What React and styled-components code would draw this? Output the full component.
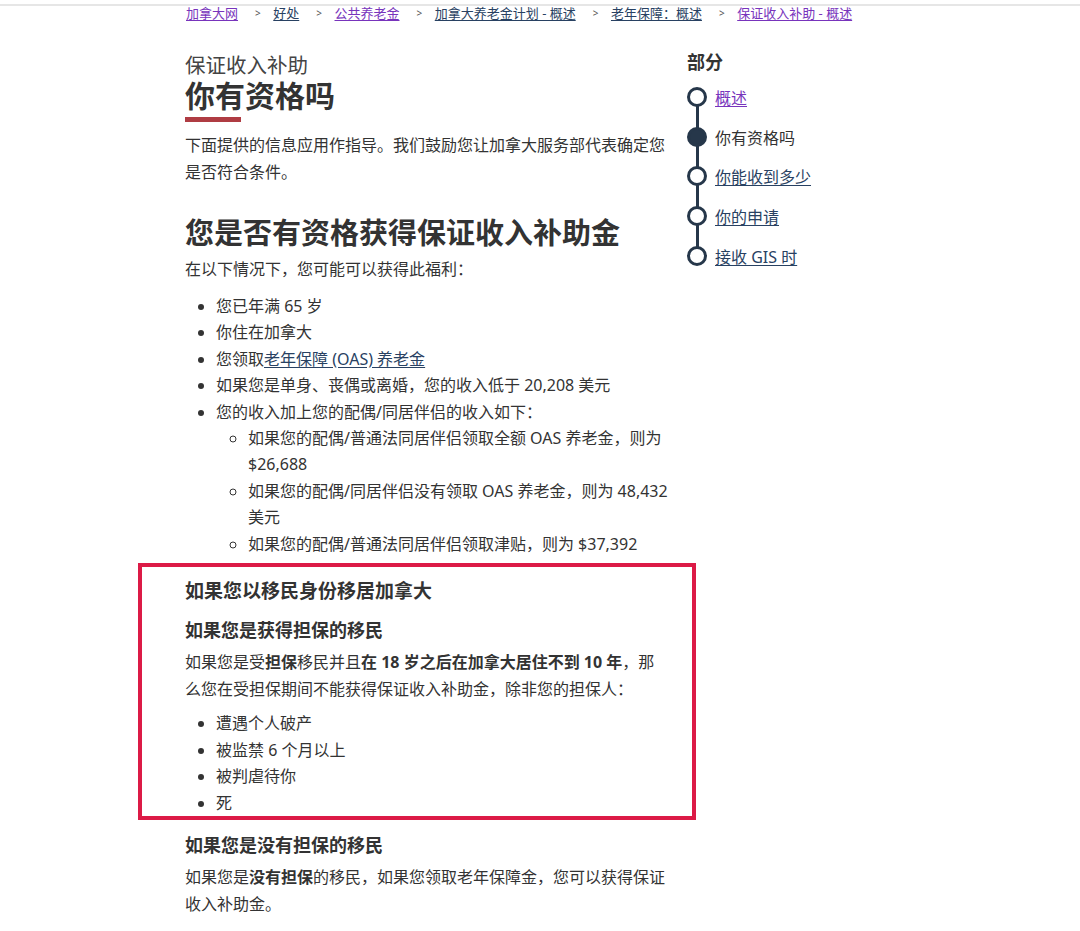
import styled, { createGlobalStyle } from "styled-components";

const GlobalStyle = createGlobalStyle`
    html, body {
        margin: 0;
        padding: 0;
        background: #fff;
    }
    body {
        font-family: "Noto Sans", "Noto Sans CJK SC", sans-serif;
        color: #333;
    }
`;

const Page = styled.div`
    width: 1080px;
    min-height: 931px;
    background: #fff;
`;

const TopRule = styled.div`
    margin-top: 4px;
    height: 2px;
    background: #e6e6e6;
`;

const Container = styled.div`
    padding-left: 185px;
`;

const Breadcrumb = styled.ol`
    display: flex;
    margin: 0;
    padding: 0 0 0 1px;
    list-style: none;
    font-size: 13px;
    line-height: 14px;
`;

const Crumb = styled.li`
    display: flex;
    align-items: center;
    & + &::before {
        content: ">";
        color: #555;
        font-size: 10px;
        margin: 0 12.5px 0 17px;
    }
`;

const Link = styled.a`
    color: ${(p) => (p.visited ? "#7834bc" : "#284162")};
    text-decoration: underline;
    text-underline-offset: 2px;
    cursor: pointer;
`;

const Columns = styled.div`
    display: flex;
    gap: 19px;
`;

const Main = styled.main`
    width: 483px;
`;

const Subtitle = styled.div`
    margin-top: 33px;
    font-size: 20.5px;
    line-height: 24px;
    color: #444;
`;

const Title = styled.h1`
    margin: 2px 0 0;
    font-size: 30px;
    line-height: 34px;
    font-weight: 700;
    color: #333;
    &::after {
        content: "";
        display: block;
        width: 56px;
        height: 5px;
        margin-top: 4px;
        background: #af3c43;
    }
`;

const Para = styled.p`
    margin: ${(p) => p.mt || 0}px 0 0;
    font-size: 16px;
    line-height: 27px;
    color: #333;
    b {
        font-weight: 700;
    }
`;

const H2 = styled.h2`
    margin: 28px 0 0;
    font-size: 29px;
    line-height: 38px;
    font-weight: 700;
    color: #333;
`;

const H3 = styled.h3`
    margin: ${(p) => p.mt || 0}px 0 0;
    font-size: ${(p) => p.size || 18}px;
    line-height: 24px;
    font-weight: 700;
    color: #333;
`;

const List = styled.ul`
    margin: ${(p) => p.mt || 0}px 0 0;
    padding-left: 31px;
    font-size: 16px;
    line-height: ${(p) => p.lh || 26.4}px;
    color: #333;
    ul {
        margin: 0;
        padding-left: 32px;
        list-style: circle;
    }
`;

const Highlight = styled.section`
    margin: 6px 0 0 -47px;
    width: 558px;
    box-sizing: border-box;
    border: 4px solid #dc1a46;
    padding: 12px 24px 0 43px;
`;

const Sidebar = styled.aside`
    width: 200px;
`;

const SideTitle = styled.h2`
    margin: 30px 0 0;
    font-size: 18px;
    line-height: 24px;
    font-weight: 700;
    color: #333;
`;

const Steps = styled.ol`
    position: relative;
    margin: 3px 0 0;
    padding: 0;
    list-style: none;
    &::before {
        content: "";
        position: absolute;
        left: 8.5px;
        top: 20px;
        bottom: 20px;
        width: 3px;
        background: #26374a;
    }
`;

const Step = styled.li`
    position: relative;
    display: flex;
    align-items: center;
    gap: 8px;
    height: 39.75px;
    font-size: 16px;
`;

const Dot = styled.span`
    position: relative;
    z-index: 1;
    flex: none;
    width: 20px;
    height: 20px;
    box-sizing: border-box;
    border-radius: 50%;
    border: 3px solid #26374a;
    background: ${(p) => (p.active ? "#26374a" : "#fff")};
`;

const steps = [
    { label: "概述", visited: true },
    { label: "你有资格吗", active: true },
    { label: "你能收到多少" },
    { label: "你的申请" },
    { label: "接收 GIS 时" },
];

const crumbs = [
    { label: "加拿大网", visited: true },
    { label: "好处" },
    { label: "公共养老金", visited: true },
    { label: "加拿大养老金计划 - 概述" },
    { label: "老年保障：概述" },
    { label: "保证收入补助 - 概述", visited: true },
];

export default function App() {
    return (
        <Page>
            <GlobalStyle />
            <TopRule />
            <Container>
                <Breadcrumb>
                    {crumbs.map((c) => (
                        <Crumb key={c.label}>
                            <Link visited={c.visited}>{c.label}</Link>
                        </Crumb>
                    ))}
                </Breadcrumb>
                <Columns>
                    <Main>
                        <Subtitle>保证收入补助</Subtitle>
                        <Title>你有资格吗</Title>
                        <Para mt={10}>
                            下面提供的信息应用作指导。我们鼓励您让加拿大服务部代表确定您是否符合条件。
                        </Para>
                        <H2>您是否有资格获得保证收入补助金</H2>
                        <Para mt={4}>在以下情况下，您可能可以获得此福利：</Para>
                        <List mt={10}>
                            <li>您已年满 65 岁</li>
                            <li>你住在加拿大</li>
                            <li>
                                您领取<Link>老年保障 (OAS) 养老金</Link>
                            </li>
                            <li>如果您是单身、丧偶或离婚，您的收入低于 20,208 美元</li>
                            <li>
                                您的收入加上您的配偶/同居伴侣的收入如下：
                                <ul>
                                    <li>如果您的配偶/普通法同居伴侣领取全额 OAS 养老金，则为 $26,688</li>
                                    <li>如果您的配偶/同居伴侣没有领取 OAS 养老金，则为 48,432 美元</li>
                                    <li>如果您的配偶/普通法同居伴侣领取津贴，则为 $37,392</li>
                                </ul>
                            </li>
                        </List>
                        <Highlight>
                            <H3 size={19}>如果您以移民身份移居加拿大</H3>
                            <H3 mt={15}>如果您是获得担保的移民</H3>
                            <Para mt={7}>
                                如果您是受<b>担保</b>移民并且<b>在 18 岁之后在加拿大居住不到 10 年</b>，那么您在受担保期间不能获得保证收入补助金，除非您的担保人：
                            </Para>
                            <List mt={7} lh={26.5}>
                                <li>遭遇个人破产</li>
                                <li>被监禁 6 个月以上</li>
                                <li>被判虐待你</li>
                                <li>死</li>
                            </List>
                        </Highlight>
                        <H3 mt={13}>如果您是没有担保的移民</H3>
                        <Para mt={7}>
                            如果您是<b>没有担保</b>的移民，如果您领取老年保障金，您可以获得保证收入补助金。
                        </Para>
                    </Main>
                    <Sidebar>
                        <SideTitle>部分</SideTitle>
                        <Steps>
                            {steps.map((s) => (
                                <Step key={s.label}>
                                    <Dot active={s.active} />
                                    {s.active ? (
                                        <span>{s.label}</span>
                                    ) : (
                                        <Link visited={s.visited}>{s.label}</Link>
                                    )}
                                </Step>
                            ))}
                        </Steps>
                    </Sidebar>
                </Columns>
            </Container>
        </Page>
    );
}
